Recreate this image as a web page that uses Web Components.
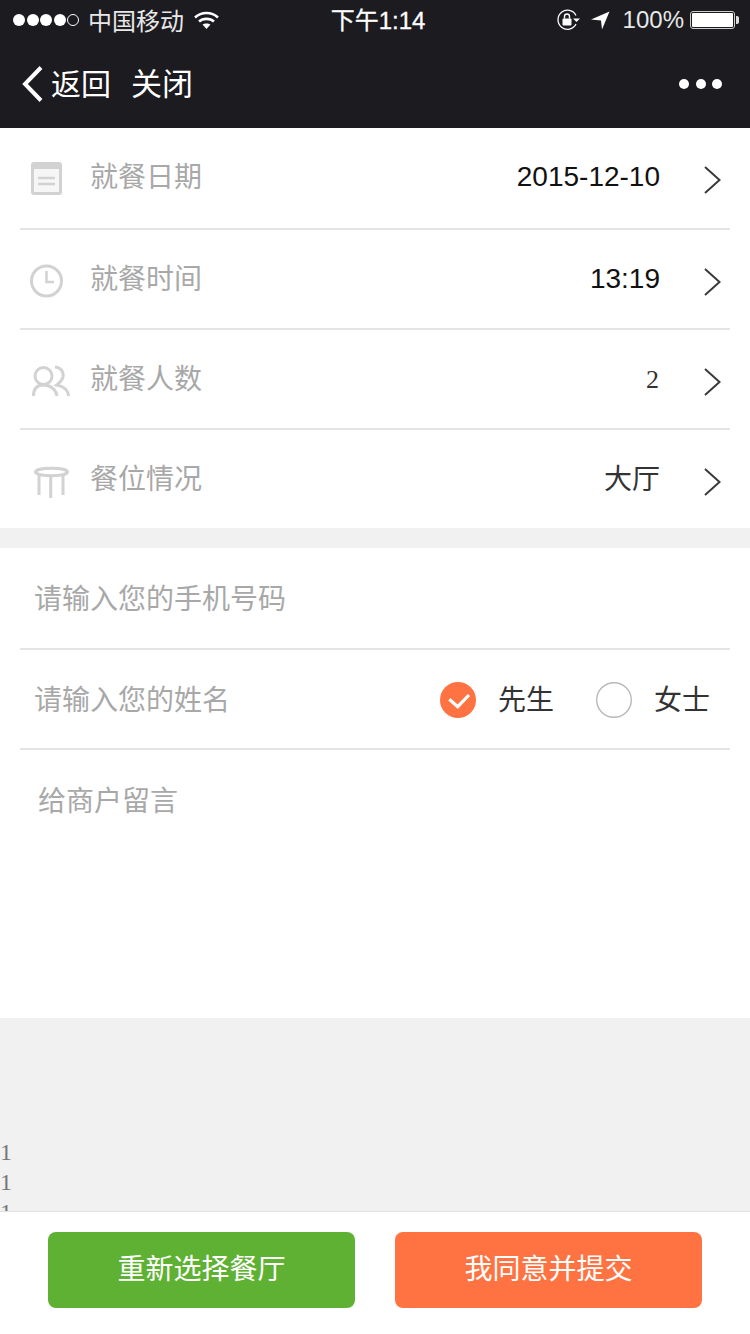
<!DOCTYPE html>
<html lang="zh">
<head>
<meta charset="utf-8">
<title>预订</title>
<style>
html, body { margin: 0; padding: 0; background: #f1f1f1; }
body { width: 750px; height: 1334px; overflow: hidden; display: flex; flex-direction: column; font-family: "Liberation Sans", "Noto Sans CJK SC", sans-serif; }
</style>
</head>
<body>
<status-bar></status-bar>
<nav-bar></nav-bar>
<form-group>
  <pick-row label="就餐日期" value="2015-12-10" icon="date" first></pick-row>
  <pick-row label="就餐时间" value="13:19" icon="time"></pick-row>
  <pick-row label="就餐人数" value="2" icon="people" serif></pick-row>
  <pick-row label="餐位情况" value="大厅" icon="seat" last></pick-row>
</form-group>
<contact-form></contact-form>
<debug-area></debug-area>
<action-bar></action-bar>

<script>
const CJK = '"Liberation Sans", "Noto Sans CJK SC", sans-serif';

class StatusBar extends HTMLElement {
    constructor() {
        super();
        this._shadowDOM = this.attachShadow({mode: "open"});
        this._shadowDOM.innerHTML = `
        <style>
            :host { display: flex; height: 40px; flex: none; background: #1b1b20; color: #fff; align-items: center; justify-content: space-between; padding: 0 11px 0 13px; font: 24px ${CJK}; position: relative; }
            .left, .right { display: flex; align-items: center; }
            .dots { display: flex; gap: 1.500px; margin-right: 9px; }
            .dots i { width: 12px; height: 12px; border-radius: 50%; background: #fff; box-sizing: border-box; }
            .dots i.off { background: none; border: 1px solid #fff; }
            .carrier { color: #e8e8e8; margin-top: -2px; }
            .wifi { margin-left: 10px; }
            .time { position: absolute; left: 0; right: 0; top: 1px; line-height: 40px; text-align: center; padding-left: 6px; -webkit-text-stroke: .3px #fff; }
            .pct { margin: 0 6px 0 13px; color: #e8e8e8; }
            .batt { width: 45px; height: 18px; border: 1px solid #ccc; border-radius: 3px; padding: 1px; box-sizing: border-box; }
            .batt b { display: block; height: 100%; background: #fff; border-radius: 1px; }
            .cap { width: 3px; height: 8px; background: #ddd; border-radius: 0 2px 2px 0; margin-left: 1px; }
        </style>
        <div class="left">
            <div class="dots"><i></i><i></i><i></i><i></i><i class="off"></i></div>
            <span class="carrier">中国移动</span>
            <svg class="wifi" width="25" height="18" viewBox="0 0 25 18" fill="none" stroke="#fff" stroke-width="2.6">
                <path d="M1 6.500C7.500 .5 17.500 .5 24 6.500"/>
                <path d="M5 10.500C9 7 16 7 20 10.500"/>
                <path d="M12.500 18L8.500 13.500C10.500 12 14.500 12 16.500 13.500Z" fill="#fff" stroke="none"/>
            </svg>
        </div>
        <div class="time">下午1:14</div>
        <div class="right">
            <svg width="24" height="22" viewBox="0 0 24 22" fill="none">
                <path d="M19 6.500A9.500 9.500 0 1 0 19 15" stroke="#fff" stroke-width="1.300"/>
                <path d="M16 9.500h7l-3.500 3.500z" fill="#fff"/>
                <rect x="5.500" y="9.500" width="9" height="7" rx="1" fill="#fff"/>
                <path d="M7.500 9.500V7.500a2.500 2.500 0 0 1 5 0V9.500" stroke="#fff" stroke-width="1.400"/>
            </svg>
            <svg style="margin-left:10px" width="19" height="19" viewBox="0 0 19 19"><path d="M0 8.500L18.500 .5L11 18.500L10 9.500Z" fill="#fff"/></svg>
            <span class="pct">100%</span>
            <div class="batt"><b></b></div><div class="cap"></div>
        </div>
        `;
    }
}

class NavBar extends HTMLElement {
    constructor() {
        super();
        this._shadowDOM = this.attachShadow({mode: "open"});
        this._shadowDOM.innerHTML = `
        <style>
            :host { display: flex; flex: none; height: 88px; box-sizing: border-box; background: #1b1b20; color: #fff; align-items: center; padding: 2px 28px 0 22px; font: 30px/36px ${CJK}; }
            .back { margin-right: 8px; margin-top: -2px; }
            .close { margin-left: 20px; font-size: 31px; }
            .more { margin-left: auto; display: flex; gap: 6.500px; margin-top: -2px; }
            .more i { width: 10px; height: 10px; border-radius: 50%; background: #fff; }
        </style>
        <svg class="back" width="21" height="36" viewBox="0 0 21 36" fill="none" stroke="#fff" stroke-width="4"><path d="M19 1.500L3 18L19 34.500"/></svg>
        <span>返回</span><span class="close">关闭</span>
        <div class="more"><i></i><i></i><i></i></div>
        `;
    }
}

class FormGroup extends HTMLElement {
    constructor() {
        super();
        this._shadowDOM = this.attachShadow({mode: "open"});
        this._shadowDOM.innerHTML = `
        <style>
            :host { display: block; flex: none; background: #fff; }
        </style>
        <slot></slot>
        `;
    }
}

const ICONS = {
    date: `<rect x="3" y="1" width="31" height="33" rx="3" fill="#d2d2d2"/><rect x="6" y="8" width="25" height="23" fill="#f6f6f6"/><path d="M10 17h17M10 23h17" stroke="#d2d2d2" stroke-width="2.500"/>`,
    time: `<circle cx="18.500" cy="18" r="15" fill="none" stroke="#d2d2d2" stroke-width="3"/><path d="M18.500 8V19H26" fill="none" stroke="#d2d2d2" stroke-width="2.500"/>`,
    people: `<g fill="none" stroke="#d2d2d2" stroke-width="3"><circle cx="15.500" cy="13" r="8.500"/><path d="M5.500 33C5.500 26 9 22 15.500 22C22 22 28 26 29 33"/><path d="M27 4C33 4.500 36 9 35 14C34 18 31 20 28.700 22C35 23 40 27 40.500 33"/></g>`,
    seat: `<g fill="none" stroke="#d2d2d2" stroke-width="3"><ellipse cx="23.500" cy="9" rx="16" ry="3.700"/><path d="M11 13V32M22.700 14V35M35 13V32"/></g>`
};

class PickRow extends HTMLElement {
    constructor() {
        super();
        this._shadowDOM = this.attachShadow({mode: "open"});
    }

    connectedCallback() {
        const icon = this.getAttribute("icon");
        this._shadowDOM.innerHTML = `
        <style>
            :host { display: block; padding: 0 20px; }
            .row { height: 100px; box-sizing: border-box; display: flex; align-items: center; border-bottom: 2px solid #e4e4e4; padding: 0 8px 0 8px; }
            :host([first]) .row { height: 102px; padding-bottom: 2px; }
            :host([last]) .row { height: 98px; border-bottom: 0; }
            svg.icon { flex: none; margin-top: 4px; }
            .label { margin-left: 18px; font: 28px ${CJK}; color: #a8a8a8; position: relative; top: -2px; }
            .value { margin-left: auto; font: 28px ${CJK}; color: #111; position: relative; top: 0; }
            :host([last]) .value { color: #333; top: -2px; }
            :host([serif]) .value { font: 26px "Liberation Serif", serif; color: #333; top: 1px; left: -1px; }
            svg.arrow { margin-left: 44px; flex: none; margin-top: 6px; }
        </style>
        <div class="row">
            <svg class="icon" width="44" height="36" viewBox="0 0 44 36">${ICONS[icon]}</svg>
            <span class="label">${this.getAttribute("label")}</span>
            <span class="value">${this.getAttribute("value")}</span>
            <svg class="arrow" width="18" height="30" viewBox="0 0 18 30" fill="none" stroke="#3a3a3a" stroke-width="2"><path d="M1 2L15.500 15L1 28"/></svg>
        </div>
        `;
    }
}

class ContactForm extends HTMLElement {
    constructor() {
        super();
        this._shadowDOM = this.attachShadow({mode: "open"});
        this._shadowDOM.innerHTML = `
        <style>
            :host { display: block; flex: none; height: 470px; margin-top: 20px; background: #fff; padding: 0 20px; box-sizing: border-box; font: 28px ${CJK}; color: #a8a8a8; }
            .line { height: 102px; box-sizing: border-box; border-bottom: 2px solid #e4e4e4; display: flex; align-items: center; padding: 0 20px 2px 14px; }
            .line + .line { height: 100px; }
            .sex { display: flex; align-items: center; margin-left: auto; color: #333; }
            .sex svg { flex: none; margin: 4px 22px 0 0; }
            .sex svg.off { margin: 4px 22px 0 42px; }
            .msg { padding: 35px 0 0 18px; line-height: 34px; }
        </style>
        <div class="line">请输入您的手机号码</div>
        <div class="line">
            <span>请输入您的姓名</span>
            <div class="sex">
                <svg width="36" height="36" viewBox="0 0 36 36"><circle cx="18" cy="18" r="18" fill="#ff7342"/><path d="M9.300 17.300L17.700 24.700L29 13" fill="none" stroke="#fff" stroke-width="3.200"/></svg>
                <span>先生</span>
                <svg class="off" width="36" height="36" viewBox="0 0 36 36"><circle cx="18" cy="18" r="17.300" fill="#fff" stroke="#b8b8b8" stroke-width="1.400"/></svg>
                <span>女士</span>
            </div>
        </div>
        <div class="msg">给商户留言</div>
        `;
    }
}

class DebugArea extends HTMLElement {
    constructor() {
        super();
        this._shadowDOM = this.attachShadow({mode: "open"});
        this._shadowDOM.innerHTML = `
        <style>
            :host { display: block; flex: none; height: 193px; overflow: hidden; background: #f1f1f1; box-sizing: border-box; padding-top: 119px; font: 24px/30px "Liberation Serif", serif; color: #777; }
        </style>
        <div>1</div><div>1</div><div>1</div>
        `;
    }
}

class ActionBar extends HTMLElement {
    constructor() {
        super();
        this._shadowDOM = this.attachShadow({mode: "open"});
        this._shadowDOM.innerHTML = `
        <style>
            :host { display: flex; flex: none; height: 123px; box-sizing: border-box; background: #fff; border-top: 1px solid #e0e0e0; padding: 20px 48px 0; gap: 40px; align-items: flex-start; }
            .btn { width: 307px; height: 76px; border-radius: 8px; color: #fff; font: 28px/76px ${CJK}; text-align: center; }
            .green { background: #5fb134; }
            .orange { background: #ff7342; }
        </style>
        <div class="btn green">重新选择餐厅</div>
        <div class="btn orange">我同意并提交</div>
        `;
    }
}

customElements.define("status-bar", StatusBar);
customElements.define("nav-bar", NavBar);
customElements.define("form-group", FormGroup);
customElements.define("pick-row", PickRow);
customElements.define("contact-form", ContactForm);
customElements.define("debug-area", DebugArea);
customElements.define("action-bar", ActionBar);
</script>
</body>
</html>
